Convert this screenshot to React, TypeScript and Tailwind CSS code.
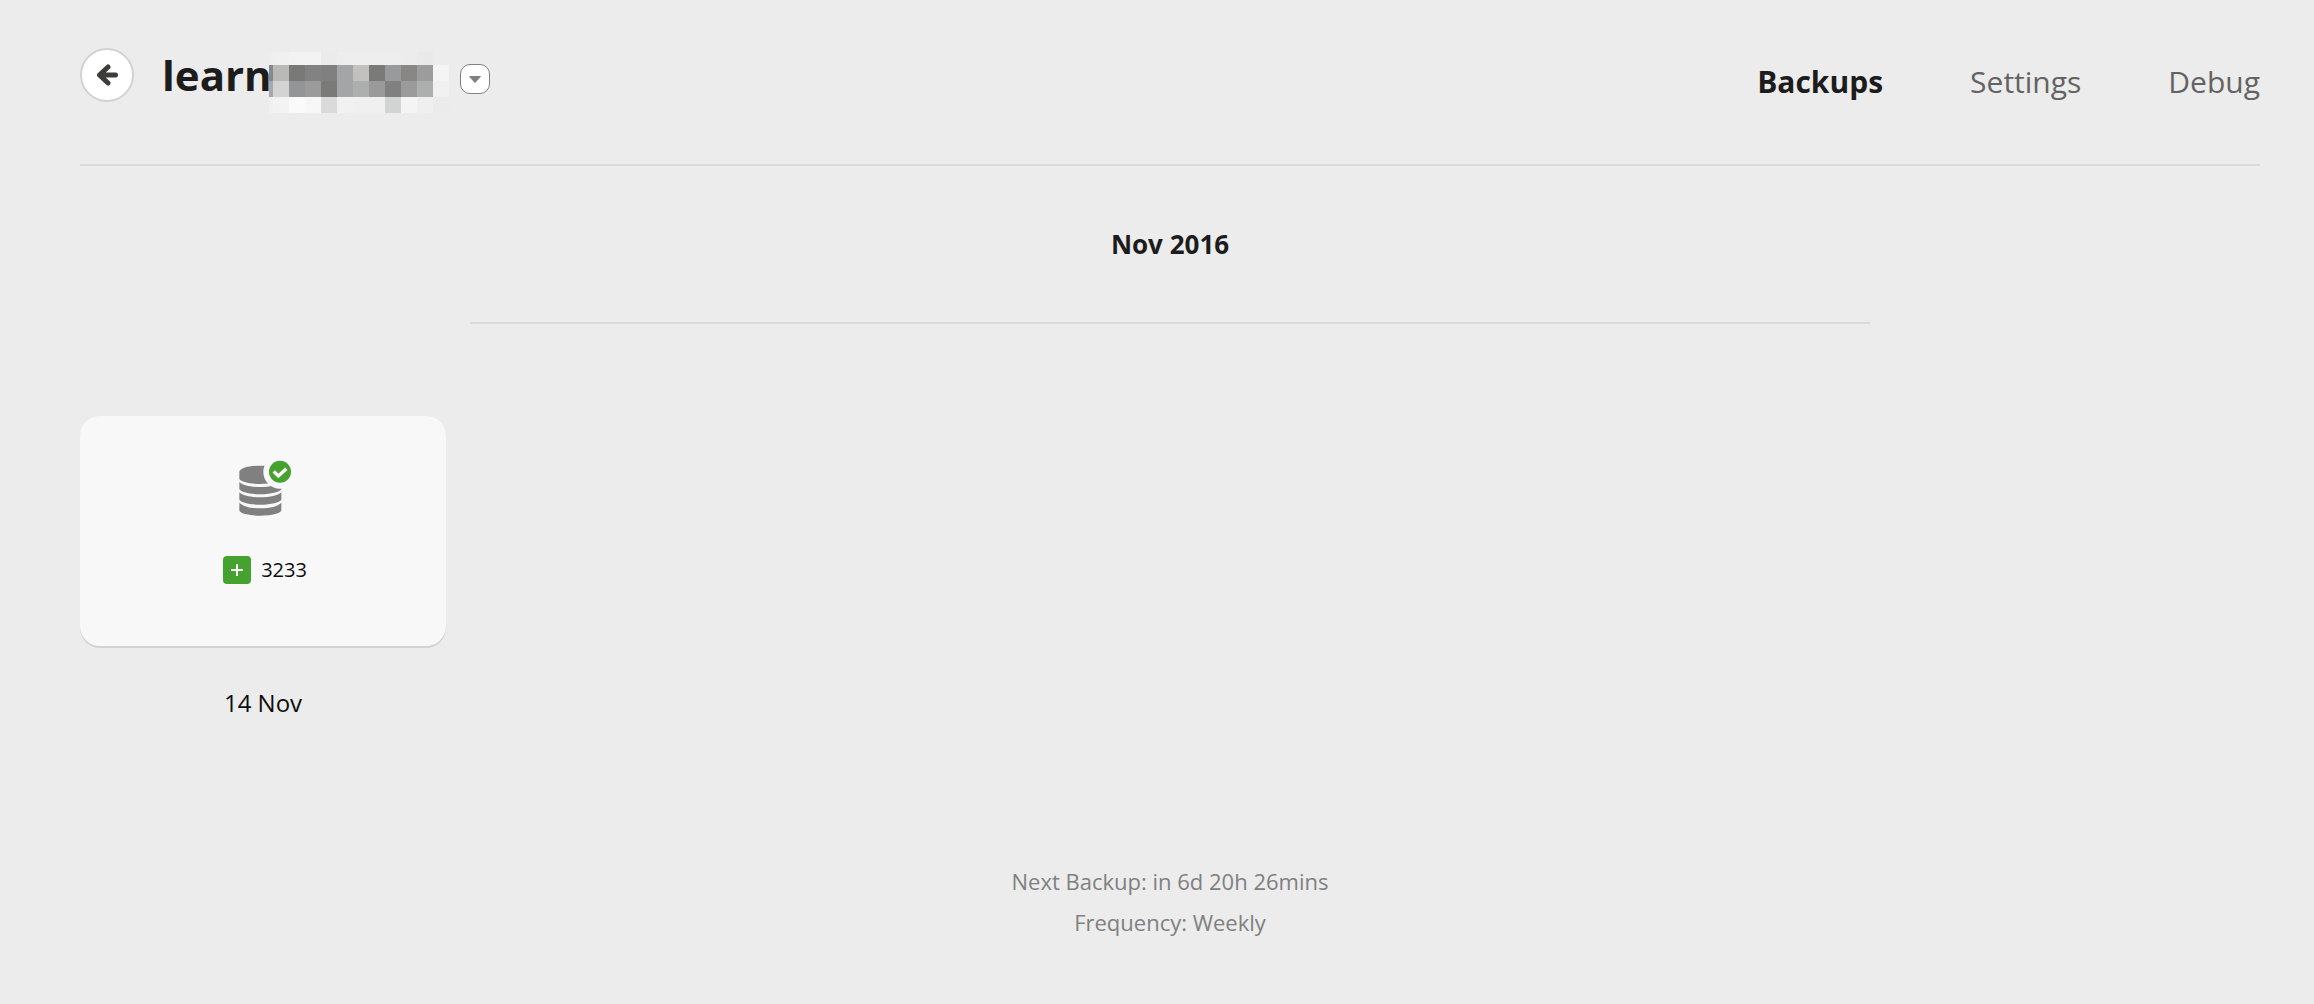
const mosaic: string[] = [
  "bg-[#f0f0f0] bg-[#f3f3f3] bg-[#f3f3f3] bg-[#ebebeb] bg-[#eeeeee] bg-[#eeeeee] bg-[#eeeeee] bg-[#eeeeee] bg-[#ececec] bg-[#e9e9e9] bg-[#ececec]",
  "bg-[#b9b9b7] bg-[#797977] bg-[#828282] bg-[#808080] bg-[#a3a5a7] bg-[#c2c1bf] bg-[#7a7a78] bg-[#999a9b] bg-[#888785] bg-[#9c9c9c] bg-[#f4f4f4]",
  "bg-[#d3d3d3] bg-[#949596] bg-[#9b9b9c] bg-[#7a7a78] bg-[#a3a5a7] bg-[#acafae] bg-[#9a9a9a] bg-[#808080] bg-[#9b9b9b] bg-[#acafae] bg-[#f1f1f1]",
  "bg-[#f3f3f3] bg-[#fafafa] bg-[#f7f7f7] bg-[#dadada] bg-[#f1f1f1] bg-[#f0f0f0] bg-[#f0f0f0] bg-[#d2d3d3] bg-[#f4f4f4] bg-[#efefef] bg-[#ebebeb]",
];

const edge: string[] = ["bg-[#eeeeee]", "bg-[#888888]", "bg-[#a8a8a8]", "bg-[#f0f0f0]"];
const rowHeight: string[] = ["h-[13px]", "h-4", "h-4", "h-4"];

function RedactedName() {
  return (
    <span aria-hidden="true" className="absolute top-px left-[107px] flex flex-col">
      {mosaic.map((row, r) => (
        <span key={r} className={`flex ${rowHeight[r]}`}>
          <span className={`w-1 ${edge[r]}`} />
          {row.split(" ").map((cell, c) => (
            <span key={c} className={`w-4 ${cell}`} />
          ))}
        </span>
      ))}
    </span>
  );
}

function DatabaseIcon() {
  return (
    <svg aria-hidden="true" viewBox="110 55 171 180" className="h-[60px] w-[57px]">
      <g fill="#808080">
        <path d="M117 97C117 86 145 78 180 78C215 78 243 86 243 97V116C238 126 213 133 180 133C147 133 122 126 117 118Z" />
        <path d="M117 127C128 137 150 142 180 142C210 142 232 137 243 127V149C238 157 213 164 180 164C147 164 122 157 117 149Z" />
        <path d="M117 158C128 168 150 173 180 173C210 173 232 168 243 158V180C238 188 213 195 180 195C147 195 122 188 117 180Z" />
        <path d="M117 189C128 200 150 206 180 206C210 206 232 200 243 189V212C243 221 215 228 180 228C145 228 117 221 117 212Z" />
      </g>
      <circle cx="239" cy="97" r="50" fill="#f8f8f8" />
      <circle cx="239" cy="96" r="33" fill="#46a22e" />
      <path d="M220 95L234 109L258 87" fill="none" stroke="#fff" strokeWidth="10" />
    </svg>
  );
}

export default function App() {
  return (
    <div className="min-h-screen bg-[#ececec] pr-[54px] pl-20 font-['Open_Sans','Noto_Sans',sans-serif] text-[#1c1c1c]">
      <header className="flex items-start justify-between border-b-2 border-[#dadada] pt-12 pb-[62px]">
        <div className="flex items-start">
          <button
            type="button"
            aria-label="Back"
            className="flex size-[54px] items-center justify-center rounded-full border-2 border-[#d2d2d2] bg-white"
          >
            <svg aria-hidden="true" viewBox="0 0 22 22" className="size-[22px]" fill="none" stroke="#3c3c3b" strokeWidth="5" strokeLinecap="round" strokeLinejoin="round">
              <path d="M19.5 11H4M12 3L3.500 11L12 19" />
            </svg>
          </button>
          <div className="relative mt-[3px] ml-7 w-[298px]">
            <h1 className="text-[42px] leading-[48px] font-bold">learn</h1>
            <RedactedName />
          </div>
          <button
            type="button"
            aria-label="Site menu"
            className="mt-4 flex size-[30px] items-center justify-center rounded-[10px] border border-[#808080] bg-white"
          >
            <svg aria-hidden="true" viewBox="0 0 12 7" className="h-[7px] w-3" fill="#808080">
              <path d="M0.500 0H11.500Q12 0.600 11.500 1L6.600 6.500Q6 7 5.400 6.500L0.500 1Q0 0.600 0.500 0Z" />
            </svg>
          </button>
        </div>
        <nav className="mt-[14px] flex gap-[87px] text-[30px] leading-[40px] text-[#636363]">
          <a href="#backups" aria-current="page" className="font-bold text-[#1c1c1c]">Backups</a>
          <a href="#settings">Settings</a>
          <a href="#debug">Debug</a>
        </nav>
      </header>

      <main>
        <h2 className="mx-auto max-w-[1400px] border-b-2 border-[#dadada] py-[60px] text-center text-[26px] leading-9 font-bold">
          Nov 2016
        </h2>

        <section className="mt-[92px] flex flex-wrap gap-6">
          <article className="w-[366px] text-center text-[#0c0c0c]">
            <a
              href="#backup-14-nov"
              className="flex h-[230px] flex-col items-center rounded-[20px] bg-[#f8f8f8] pt-[42px] shadow-[0_2px_0_#d2d2d2]"
            >
              <span className="pl-1">
                <DatabaseIcon />
              </span>
              <span className="mt-[38px] flex items-center gap-[10px] pl-1 text-xl leading-7">
                <span className="flex size-7 items-center justify-center rounded bg-[#46a22e]">
                  <svg aria-hidden="true" viewBox="0 0 12 12" className="size-3" stroke="#fff" strokeWidth="2">
                    <path d="M6 0V12M0 6H12" />
                  </svg>
                </span>
                3233
              </span>
            </a>
            <h3 className="mt-[39px] text-2xl leading-9">14 Nov</h3>
          </article>
        </section>

        <footer className="mt-[140px] pb-[50px] text-center text-[22px] leading-[41px] text-[#808080]">
          <p>Next Backup: in 6d 20h 26mins</p>
          <p>Frequency: Weekly</p>
        </footer>
      </main>
    </div>
  );
}
